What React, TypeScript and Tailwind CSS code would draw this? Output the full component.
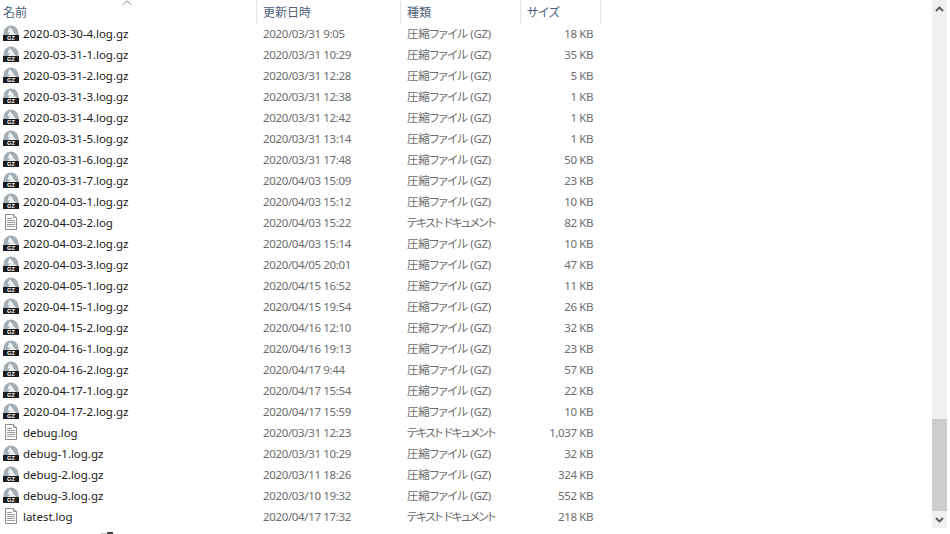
const gz = (name: string, date: string, size: string) => ({ name, date, type: "圧縮ファイル (GZ)", size, icon: "gz" });
const txt = (name: string, date: string, size: string) => ({ name, date, type: "テキスト ドキュメント", size, icon: "txt" });

const rows = [
  gz("2020-03-30-4.log.gz", "2020/03/31 9:05", "18 KB"),
  gz("2020-03-31-1.log.gz", "2020/03/31 10:29", "35 KB"),
  gz("2020-03-31-2.log.gz", "2020/03/31 12:28", "5 KB"),
  gz("2020-03-31-3.log.gz", "2020/03/31 12:38", "1 KB"),
  gz("2020-03-31-4.log.gz", "2020/03/31 12:42", "1 KB"),
  gz("2020-03-31-5.log.gz", "2020/03/31 13:14", "1 KB"),
  gz("2020-03-31-6.log.gz", "2020/03/31 17:48", "50 KB"),
  gz("2020-03-31-7.log.gz", "2020/04/03 15:09", "23 KB"),
  gz("2020-04-03-1.log.gz", "2020/04/03 15:12", "10 KB"),
  txt("2020-04-03-2.log", "2020/04/03 15:22", "82 KB"),
  gz("2020-04-03-2.log.gz", "2020/04/03 15:14", "10 KB"),
  gz("2020-04-03-3.log.gz", "2020/04/05 20:01", "47 KB"),
  gz("2020-04-05-1.log.gz", "2020/04/15 16:52", "11 KB"),
  gz("2020-04-15-1.log.gz", "2020/04/15 19:54", "26 KB"),
  gz("2020-04-15-2.log.gz", "2020/04/16 12:10", "32 KB"),
  gz("2020-04-16-1.log.gz", "2020/04/16 19:13", "23 KB"),
  gz("2020-04-16-2.log.gz", "2020/04/17 9:44", "57 KB"),
  gz("2020-04-17-1.log.gz", "2020/04/17 15:54", "22 KB"),
  gz("2020-04-17-2.log.gz", "2020/04/17 15:59", "10 KB"),
  txt("debug.log", "2020/03/31 12:23", "1,037 KB"),
  gz("debug-1.log.gz", "2020/03/31 10:29", "32 KB"),
  gz("debug-2.log.gz", "2020/03/11 18:26", "324 KB"),
  gz("debug-3.log.gz", "2020/03/10 19:32", "552 KB"),
  txt("latest.log", "2020/04/17 17:32", "218 KB"),
];

function GzIcon() {
  return (
    <svg width="16" height="16" viewBox="0 0 16 16" className="-mt-px shrink-0">
      <path d="M0.5 11 V8 A7.5 7.5 0 0 1 15.5 8 V11 Z" fill="#a3adb3" />
      <path d="M6.5 2 L11 6.5 L9.5 6.5 L14 10.5 L4 10.5 L7.5 7.5 L4.5 7.5 Z" fill="#eef1f2" />
      <rect x="0" y="10" width="16" height="6" fill="#1c1c1c" />
      <text x="8" y="15.2" textAnchor="middle" fontSize="5.6" fontWeight="700" fill="#ffffff" fontFamily="'Liberation Sans', sans-serif">GZ</text>
    </svg>
  );
}

function TxtIcon() {
  return (
    <svg width="16" height="16" viewBox="0 0 16 16" className="-mt-px shrink-0">
      <path d="M2.5 0.5 H10.5 L13.5 3.5 V15.5 H2.5 Z" fill="#ffffff" stroke="#8c8c8c" />
      <path d="M10.5 0.5 V3.5 H13.5" fill="#e4e4e4" stroke="#8c8c8c" />
      <path d="M4 4.5 H9 M4 6.5 H12 M4 8.5 H12 M4 10.5 H12 M4 12.5 H12" stroke="#9a9a9a" />
    </svg>
  );
}

function HeaderCell({ label, className }: { label: string; className: string }) {
  return (
    <div className={`flex h-[24px] items-center whitespace-nowrap border-r border-[#e5e5e5] pt-[2px] text-[12px] text-[#4c607a] [font-feature-settings:'palt'] ${className}`}>
      {label}
    </div>
  );
}

export default function App() {
  return (
    <div
      className="relative flex h-[534px] w-[950px] overflow-hidden bg-white text-[11.5px]"
      style={{ fontFamily: "'Noto Sans', 'Noto Sans CJK JP', sans-serif" }}
    >
      <div className="flex w-[932px] shrink-0 flex-col">
        <div className="relative flex h-[23px]">
          <HeaderCell label="名前" className="w-[257px] pl-[3px]" />
          <HeaderCell label="更新日時" className="w-[144px] pl-[6px]" />
          <HeaderCell label="種類" className="w-[120px] pl-[6px]" />
          <HeaderCell label="サイズ" className="w-[80px] pl-[6px]" />
          <svg width="10" height="6" viewBox="0 0 10 6" className="absolute left-[122px] top-0">
            <path d="M0.5 5 L5 0.8 L9.5 5" fill="none" stroke="#8a8a8a" />
          </svg>
        </div>
        {rows.map((r) => (
          <div key={r.name} className="flex h-[21px] items-center whitespace-nowrap leading-[21px]">
            <div className="flex w-[257px] items-center gap-[4px] pl-[3px] text-[#1a1a1a]">
              {r.icon === "gz" ? <GzIcon /> : <TxtIcon />}
              <span className="tracking-[-0.03px]">{r.name}</span>
            </div>
            <div className="w-[144px] pl-[6px] tracking-[-0.35px] text-[#6d6d6d]">{r.date}</div>
            <div className={`w-[120px] pl-[6px] text-[#6d6d6d] [font-feature-settings:'palt'] ${r.icon === "gz" ? "tracking-[-0.35px]" : "tracking-[-1.25px]"}`}>{r.type}</div>
            <div className="w-[72px] text-right tracking-[-0.4px] text-[#6d6d6d]">{r.size}</div>
          </div>
        ))}
      </div>
      <div className="flex h-[528px] w-[15px] shrink-0 flex-col bg-[#f0f0f0]">
        <div className="flex h-[17px] items-center justify-center pt-px">
          <svg width="9" height="6" viewBox="0 0 9 6">
            <path d="M1 5 L4.5 1.5 L8 5" fill="none" stroke="#606060" strokeWidth="2" />
          </svg>
        </div>
        <div className="h-[402px]" />
        <div className="h-[92px] bg-[#cdcdcd]" />
        <div className="flex h-[17px] items-center justify-center">
          <svg width="9" height="6" viewBox="0 0 9 6">
            <path d="M1 1 L4.5 4.5 L8 1" fill="none" stroke="#606060" strokeWidth="2" />
          </svg>
        </div>
      </div>
      <svg width="14" height="2" viewBox="0 0 14 2" className="absolute left-[101px] top-[532px]">
        <path d="M0 1.5 H5" stroke="#c8c8c8" />
        <path d="M6 1 H12" stroke="#444444" strokeWidth="2" />
      </svg>
    </div>
  );
}
